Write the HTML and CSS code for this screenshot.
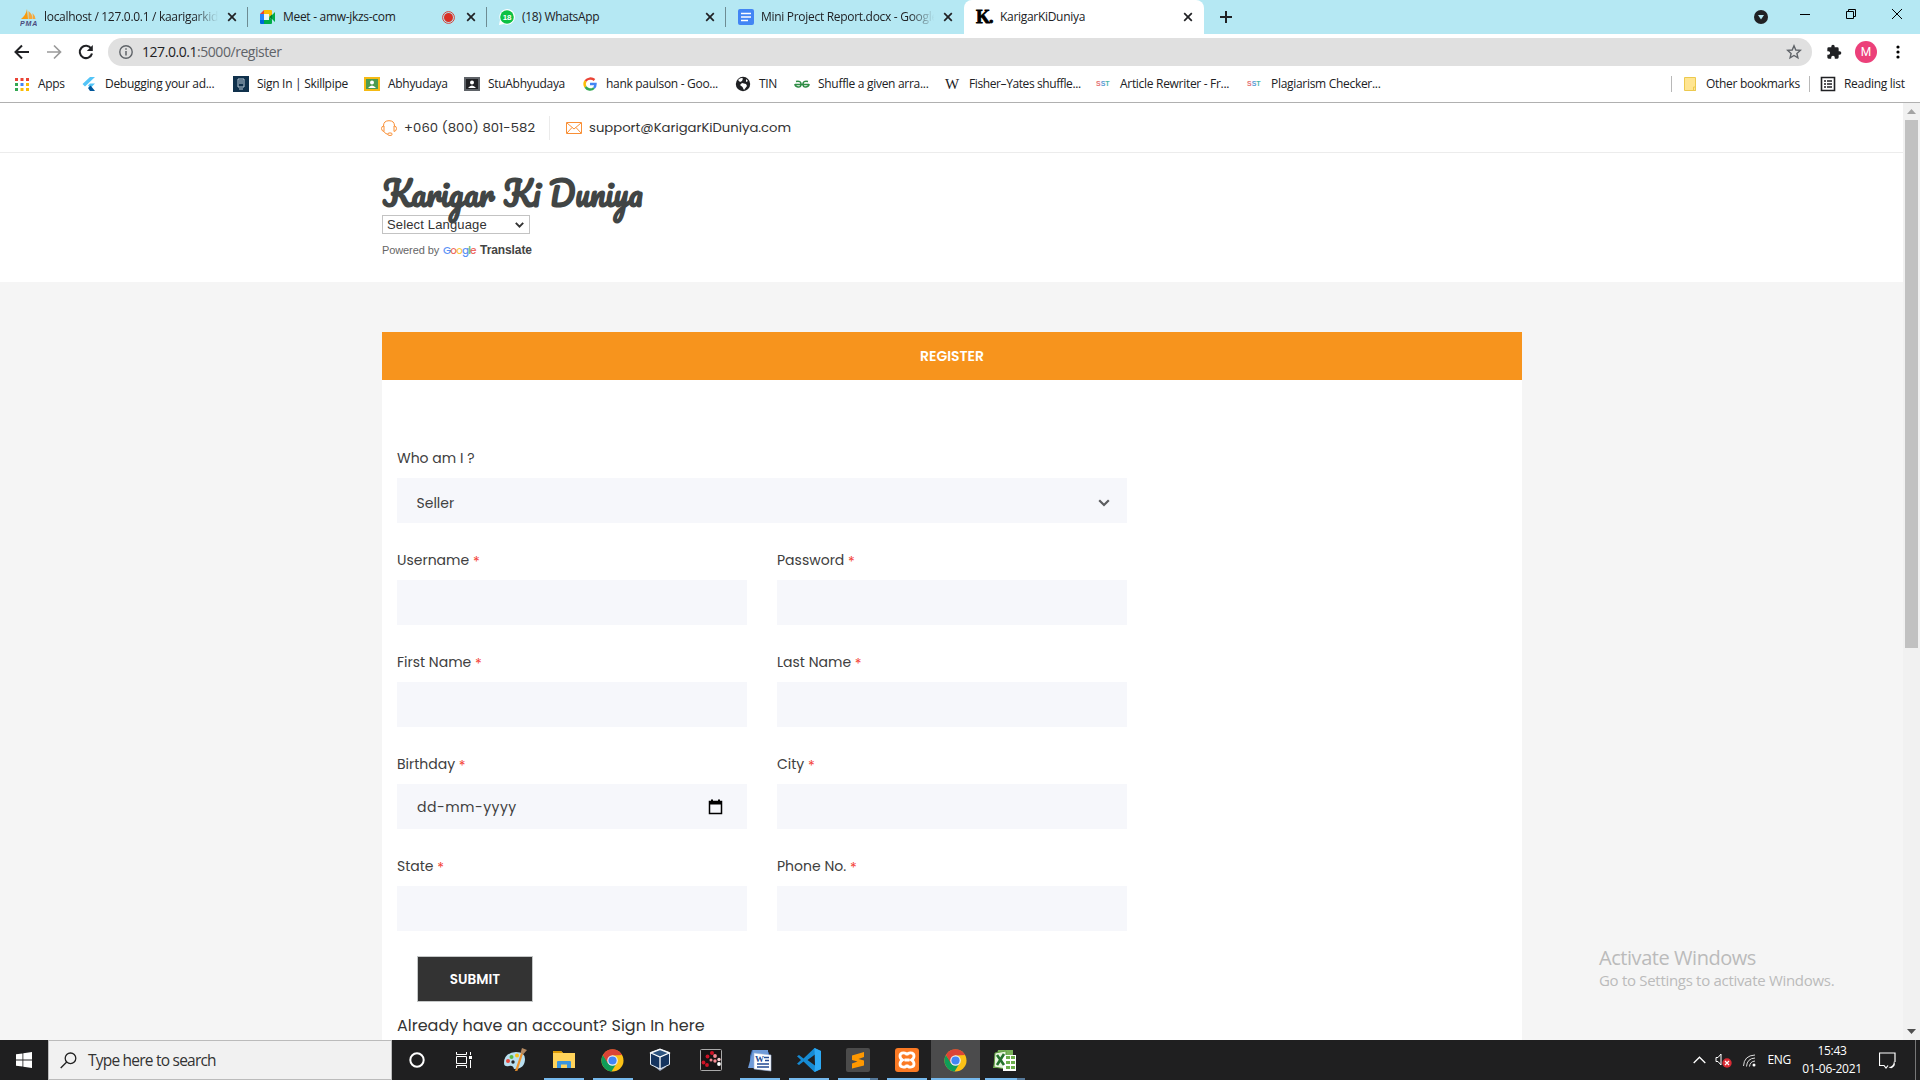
FILE: index.html
```html
<!DOCTYPE html>
<html lang="en">
<head>
<meta charset="utf-8">
<title>KarigarKiDuniya</title>
<link rel="stylesheet" href="styles.css">
</head>
<body>
<svg class="defs" width="0" height="0">
  <symbol id="chrome" viewBox="0 0 24 24">
    <circle cx="12" cy="12" r="11.5" fill="#fbc116"/>
    <path d="M2 6.2A11.5 11.5 0 0 0 11 23.5L16.8 14 12 12 7.500 14z" fill="#0f9d58"/>
    <path d="M2 6.200A11.500 11.500 0 0 1 22 6.200L12 6.700 7 14.500z" fill="#db4437"/>
    <circle cx="12" cy="12" r="5.500" fill="#f1f1f1"/><circle cx="12" cy="12" r="4.300" fill="#4285f4"/>
  </symbol>
  <symbol id="close" viewBox="0 0 10 10"><path d="M1.200 1.200l7.600 7.600M8.800 1.200L1.200 8.800" stroke="#202124" stroke-width="1.700"/></symbol>
</svg>

<header class="tabs">
  <div class="tab">
    <svg width="17" height="17" viewBox="0 0 17 17"><path d="M1 10Q6 6 7 0l1 10z" fill="#f89c0e"/><path d="M8.500 2q4 3 4 8h-4zM12.500 4q3 3 3 6h-2.500z" fill="#f5a83a"/><text x="0" y="16.500" class="pma" textLength="17">PMA</text></svg>
    <span class="tab-title faded">localhost / 127.0.0.1 / kaarigarkid</span>
    <svg class="x"><use href="#close"/></svg>
  </div>
  <div class="tab meet">
    <svg width="17" height="16" viewBox="0 0 17 16"><path d="M1 5l4-4v4z" fill="#ea4335"/><path d="M5 1h7q1 0 1 1v4l-3 2V5H5z" fill="#fbbc04"/><path d="M1 5h4v6H1z" fill="#2684fc"/><path d="M1 11h4v4H2q-1 0-1-1z" fill="#0066da"/><path d="M5 5h5v6H5z" fill="#e8f6f2"/><path d="M5 11h5V8l3 2.500V14q0 1-1 1H5zM13 6l3-3v10l-3-3z" fill="#00ac47"/><path d="M10 8l3-2.500v5z" fill="#00832d"/></svg>
    <span class="tab-title">Meet - amw-jkzs-com</span>
    <svg class="rec" width="13" height="13" viewBox="0 0 13 13"><circle cx="6.500" cy="6.500" r="5.900" fill="none" stroke="#d93025" stroke-width=".900"/><circle cx="6.500" cy="6.500" r="4.500" fill="#d93025"/></svg>
    <svg class="x"><use href="#close"/></svg>
  </div>
  <div class="tab">
    <svg width="16" height="16" viewBox="0 0 16 16"><path d="M0 16l1-5a7.800 7.800 0 1 1 4 4z" fill="#fff"/><circle cx="8" cy="8" r="6.800" fill="#0dc143"/><text x="8" y="11" class="wa" text-anchor="middle">18</text></svg>
    <span class="tab-title">(18) WhatsApp</span>
    <svg class="x"><use href="#close"/></svg>
  </div>
  <div class="tab last">
    <svg width="16" height="16" viewBox="0 0 16 16"><rect width="16" height="16" rx="2" fill="#4285f4"/><path d="M3 4.500h10M3 8h10M3 11.500h7" stroke="#fff" stroke-width="1.700"/></svg>
    <span class="tab-title faded">Mini Project Report.docx - Google</span>
    <svg class="x"><use href="#close"/></svg>
  </div>
  <div class="tab active">
    <span class="k">K.</span>
    <span class="tab-title">KarigarKiDuniya</span>
    <svg class="x"><use href="#close"/></svg>
  </div>
  <svg class="plus" width="12" height="12" viewBox="0 0 12 12"><path d="M6 0v12M0 6h12" stroke="#202124" stroke-width="2"/></svg>
  <div class="window-controls">
    <svg class="tab-search" width="14" height="14" viewBox="0 0 14 14"><circle cx="7" cy="7" r="7" fill="#202124"/><path d="M4 5h6l-3 4.500z" fill="#b5e8f3"/></svg>
    <svg width="12" height="12" viewBox="0 0 12 12"><path d="M1 6.500h10" stroke="#000"/></svg>
    <svg width="12" height="12" viewBox="0 0 12 12"><path d="M1.500 3.500h7v7h-7zM3.500 3V1.500h7v7H9" fill="none" stroke="#000"/></svg>
    <svg width="12" height="12" viewBox="0 0 12 12"><path d="M1 1l10 10M11 1L1 11" stroke="#000"/></svg>
  </div>
</header>

<nav class="toolbar">
  <svg width="16" height="16" viewBox="0 0 16 16"><path d="M15 8H2M8 1.500L1.500 8 8 14.500" fill="none" stroke="#202124" stroke-width="2"/></svg>
  <svg width="16" height="16" viewBox="0 0 16 16"><path d="M1 8h13M8 1.500L14.500 8 8 14.500" fill="none" stroke="#9a9a9a" stroke-width="1.700"/></svg>
  <svg width="16" height="16" viewBox="0 0 16 16"><path d="M13.200 4.500A6.200 6.200 0 1 0 14 9.500" fill="none" stroke="#202124" stroke-width="2.100"/><path d="M14.800 1v6h-6z" fill="#202124"/></svg>
  <div class="omnibox">
    <svg width="14" height="14" viewBox="0 0 14 14"><circle cx="7" cy="7" r="6.200" fill="none" stroke="#5f6368" stroke-width="1.400"/><path d="M7 6v4.500M7 3.300v1.500" stroke="#5f6368" stroke-width="1.500"/></svg>
    <span class="url">127.0.0.1<span class="path">:5000/register</span></span>
    <svg class="star" width="16" height="16" viewBox="0 0 16 16"><path d="M8 1.800l1.800 4.200 4.500.400-3.400 3 1 4.400L8 11.500l-3.900 2.300 1-4.400-3.400-3 4.500-.400z" fill="none" stroke="#5f6368" stroke-width="1.400"/></svg>
  </div>
  <svg class="puzzle" width="16" height="16" viewBox="0 0 24 24"><path d="M20.500 11H19V7a2 2 0 0 0-2-2h-4V3.500a2.500 2.500 0 0 0-5 0V5H4a2 2 0 0 0-2 2v3.800h1.500a2.700 2.700 0 0 1 0 5.400H2V20a2 2 0 0 0 2 2h3.800v-1.500a2.700 2.700 0 0 1 5.400 0V22H17a2 2 0 0 0 2-2v-4h1.500a2.500 2.500 0 0 0 0-5z" fill="#202124"/></svg>
  <span class="avatar">M</span>
  <svg class="dots" width="4" height="14" viewBox="0 0 4 14"><circle cx="2" cy="2" r="1.600"/><circle cx="2" cy="7" r="1.600"/><circle cx="2" cy="12" r="1.600"/></svg>
</nav>

<nav class="bookmarks">
  <div class="bm"><svg viewBox="0 0 16 16"><path d="M1 2h3v3H1zM6.500 2h3v3h-3zM12 2h3v3h-3z" fill="#ea4335"/><path d="M1 7h3v3H1z" fill="#34a853"/><path d="M6.500 7h3v3h-3z" fill="#4285f4"/><path d="M12 7h3v3h-3zM6.500 12h3v3h-3zM12 12h3v3h-3z" fill="#fbbc04"/><path d="M1 12h3v3H1z" fill="#34a853"/></svg><span>Apps</span></div>
  <div class="bm"><svg viewBox="0 0 16 16"><path d="M9 1h5L4 10.500 1.500 8zM9 7.500h5L9.500 12 7 9.500z" fill="#54c5f8"/><path d="M7 12l2.500-2.500L14 15H9z" fill="#01579b"/></svg><span>Debugging your ad...</span></div>
  <div class="bm"><svg viewBox="0 0 16 16"><path d="M0 0h16v16H0z" fill="#10314c"/><path d="M5 3h6v8H5zM6 13h4M6 5h4M6 7h4" fill="none" stroke="#b9cad6"/></svg><span>Sign In | Skillpipe</span></div>
  <div class="bm"><svg viewBox="0 0 16 16"><path d="M0 1h16v14H0z" fill="#f5ba14"/><path d="M2 3h12v10H2z" fill="#4c9b50"/><circle cx="8" cy="6.500" r="2" fill="#fff"/><path d="M4 12q4-5 8 0z" fill="#fff"/></svg><span>Abhyudaya</span></div>
  <div class="bm"><svg viewBox="0 0 16 16"><path d="M0 1h16v14H0z" fill="#5f6368"/><path d="M2 3h12v10H2z" fill="#202124"/><circle cx="8" cy="6.500" r="2" fill="#fff"/><path d="M4 12q4-5 8 0z" fill="#fff"/></svg><span>StuAbhyudaya</span></div>
  <div class="bm"><svg viewBox="0 0 16 16" fill="none" stroke-width="2.400"><path d="M12.500 4A6 5.500 0 0 0 3.500 5" stroke="#ea4335"/><path d="M3.500 5a5.500 5.500 0 0 0 0 6" stroke="#fbbc05"/><path d="M3.500 11a5.500 5.500 0 0 0 8.500 1" stroke="#34a853"/><path d="M12 12q1.500-1.500 1.500-4H8" stroke="#4285f4"/></svg><span>hank paulson - Goo...</span></div>
  <div class="bm"><svg viewBox="0 0 16 16"><circle cx="8" cy="8" r="7.200" fill="#202124"/><path d="M3 4q3-3 5-1.500L7 5 5 6zM7 7l4 1 1 2-3 4-1.500-3L5 9M11 3l2 2-2 1z" fill="#fff"/></svg><span>TIN</span></div>
  <div class="bm"><svg viewBox="0 0 16 16" fill="none" stroke="#2f8d46" stroke-width="1.600"><path d="M1 8.500h14M2 5.500q5-1 5 2.500t-3 3-3-3M14 5.500q-5-1-5 2.500t3 3 3-3"/></svg><span>Shuffle a given arra...</span></div>
  <div class="bm"><b class="w">W</b><span class="tight">Fisher–Yates shuffle...</span></div>
  <div class="bm"><b class="sst"><i>S</i><i>S</i><i>T</i></b><span>Article Rewriter - Fr...</span></div>
  <div class="bm"><b class="sst"><i>S</i><i>S</i><i>T</i></b><span>Plagiarism Checker...</span></div>
  <div class="bm side"><svg viewBox="0 0 16 16"><path d="M2.500 1.500h11v13h-11z" fill="#ffe591" stroke="#ecc94f"/><path d="M11.500 14.500V11h2v3.500z" fill="#ffe591" stroke="#ecc94f"/></svg><span>Other bookmarks</span></div>
  <div class="bm side"><svg viewBox="0 0 16 16"><path d="M1.500 1.500h13v13h-13z" fill="none" stroke="#202124" stroke-width="1.600"/><path d="M4 5h2M7 5h5M4 8h2M7 8h5M4 11h2M7 11h5" stroke="#202124" stroke-width="1.500"/></svg><span>Reading list</span></div>
</nav>

<div class="viewport">
  <div class="page">
    <div class="topbar">
      <div class="contact phone">
        <svg width="16" height="16" viewBox="0 0 16 16" fill="none" stroke="#f98f35"><path d="M2.500 6Q2.500.700 8 .700T13.500 6M3 6Q.500 6 .500 8.500T3 11.500zM13 6q2.500 0 2.500 2.500T13 11.500zM3 11.500q1 2.500 4 2.800"/><rect x="7" y="13" width="4" height="2.400" rx="1"/></svg>
        <span>+060 (800) 801-582</span>
      </div>
      <div class="contact mail">
        <svg width="16" height="12" viewBox="0 0 16 12" fill="none" stroke="#f98f35"><path d="M.500.500h15v11H.500zM1 1l7 6 7-6M1 11l5-5.500M15 11l-5-5.500"/></svg>
        <span>support@KarigarKiDuniya.com</span>
      </div>
    </div>
    <div class="masthead">
      <svg class="logo" width="266" height="48" viewBox="0 0 266 48"><text x="0" y="32" textLength="261" lengthAdjust="spacingAndGlyphs">Karigar Ki Duniya</text></svg>
      <div class="lang"><span>Select Language</span><svg width="9" height="6" viewBox="0 0 9 6"><path d="M.800.800l3.700 3.800L8.200.800" fill="none" stroke="#333" stroke-width="1.900"/></svg></div>
      <div class="powered"><span class="by">Powered by</span><span class="google"><i>G</i><i>o</i><i>o</i><i>g</i><i>l</i><i>e</i></span><b>Translate</b></div>
    </div>
    <main class="card">
      <h1>REGISTER</h1>
      <form class="form">
        <div class="field wide"><label>Who am I ?</label><div class="box"><span>Seller</span><svg width="12" height="8" viewBox="0 0 12 8"><path d="M1.200 1.200L6 6l4.800-4.800" fill="none" stroke="#5c5d60" stroke-width="2.200"/></svg></div></div>
        <div class="field"><label>Username <em>*</em></label><div class="box"></div></div>
        <div class="field"><label>Password <em>*</em></label><div class="box"></div></div>
        <div class="field"><label>First Name <em>*</em></label><div class="box"></div></div>
        <div class="field"><label>Last Name <em>*</em></label><div class="box"></div></div>
        <div class="field"><label>Birthday <em>*</em></label><div class="box date"><span>dd-mm-yyyy</span><svg width="15" height="16" viewBox="0 0 15 16"><path d="M1.500 2.500h12v12h-12z" fill="none" stroke="#000" stroke-width="1.500"/><path d="M1 2h13v3.500H1zM3 .500h2V3H3zM10 .500h2V3h-2z"/></svg></div></div>
        <div class="field"><label>City <em>*</em></label><div class="box"></div></div>
        <div class="field"><label>State <em>*</em></label><div class="box"></div></div>
        <div class="field"><label>Phone No. <em>*</em></label><div class="box"></div></div>
      </form>
      <div class="submit">SUBMIT</div>
      <p class="signin">Already have an account? Sign In here</p>
    </main>
    <div class="watermark"><div>Activate Windows</div><p>Go to Settings to activate Windows.</p></div>
  </div>
  <div class="scrollbar">
    <svg width="9" height="5" viewBox="0 0 9 5"><path d="M0 5L4.500 0 9 5z" fill="#a3a3a3"/></svg>
    <div class="thumb"></div>
    <svg class="down" width="9" height="5" viewBox="0 0 9 5"><path d="M0 0l4.500 5L9 0z" fill="#505050"/></svg>
  </div>
</div>

<footer class="taskbar">
  <div class="start"><svg width="16" height="16" viewBox="0 0 16 16"><path d="M0 2.300l6.500-.900v6.200H0zM7.300 1.300L16 0v7.600H7.300zM0 8.400h6.500v6.200L0 13.700zM7.300 8.400H16V16l-8.700-1.300z" fill="#fff"/></svg></div>
  <div class="search"><svg width="17" height="17" viewBox="0 0 17 17"><circle cx="10.500" cy="6.300" r="5.300" fill="none" stroke="#222" stroke-width="1.300"/><path d="M6.700 10L.700 16" stroke="#222" stroke-width="1.300"/></svg><span>Type here to search</span></div>
  <div class="app"><svg width="16" height="16" viewBox="0 0 16 16"><circle cx="8" cy="8" r="6.700" fill="none" stroke="#fff" stroke-width="2"/></svg></div>
  <div class="app view"><svg width="18" height="16" viewBox="0 0 18 16" fill="none" stroke="#fff"><path d="M1.500 4.500h10v7h-10zM1.500 0v2.500h10V0M1.500 16v-2.500h10V16M15.500 0v3M15.500 8v8"/><path d="M14 4h3v3h-3z" fill="#fff" stroke="none"/></svg></div>
  <div class="app"><svg width="24" height="24" viewBox="0 0 24 24"><path d="M1 15Q1 5 13 4q9 0 9 7 0 10-11 10-1-4-5-3-5 1-5-3z" fill="#b9dff0"/><circle cx="5" cy="13" r="2" fill="#e5483d"/><circle cx="8.500" cy="9" r="2" fill="#58b947"/><circle cx="14" cy="7.500" r="2" fill="#fbc218"/><circle cx="10" cy="14" r="1.700" fill="#222"/><path d="M12 23l6-18 2 .800-5.500 17z" fill="#ec922e"/><path d="M17.500 5L19 0l5 2-3.500 4z" fill="#b58a62"/></svg></div>
  <div class="app run"><svg width="24" height="22" viewBox="0 0 24 22"><path d="M1 2h8l2 2h12v15H1z" fill="#ffd35a"/><path d="M1 2h8l2 2H1z" fill="#dc9a05"/><path d="M5 19v-6q0-1 1-1h12q1 0 1 1v6h-4v-3.500H9V19z" fill="#3b95dd"/></svg></div>
  <div class="app run"><svg width="23" height="23"><use href="#chrome"/></svg></div>
  <div class="app vbox"><svg width="22" height="24" viewBox="0 0 22 24"><path d="M6 19l5 4 6-4v-4H6z" fill="#9ba8c0"/><path d="M1.500 4.500L11 1l9.500 3.500v12L11 21l-9.500-4.500z" fill="#15345f" stroke="#dfe8f2"/><path d="M2 5l9 4 9-4-9-3.500zM11 9v12" fill="#2c5380" stroke="#fff" stroke-width="1.300"/></svg></div>
  <div class="app"><svg width="22" height="22" viewBox="0 0 22 22"><rect x=".500" y=".500" width="21" height="21" rx="1" fill="#171314" stroke="#aaa"/><g fill="#cf1226"><circle cx="12" cy="4" r="2"/><circle cx="7.500" cy="7.500" r="1.900"/><circle cx="3.500" cy="13.500" r="1.900"/><circle cx="7" cy="16" r="1.900"/></g><g fill="#f58b93"><circle cx="15" cy="7" r="1.900"/><circle cx="11" cy="11" r="1.500"/><circle cx="15" cy="12" r="1.700"/></g><circle cx="19" cy="10.500" r="1.700" fill="#f7c8ca"/><circle cx="19" cy="15" r="1.900" fill="#fff"/></svg></div>
  <div class="app run"><svg width="24" height="23" viewBox="0 0 24 23"><path d="M4 1h15l2 3v15H2V7z" fill="#3f6db5"/><path d="M5 1h15v18H0z" fill="#6f9bd8"/><path d="M6 4l17 2v16L6 20z" fill="#fff" stroke="#9ab4da" stroke-width=".600"/><path d="M16 8.500h5M17 11.500h4M9 15h12M9 18h12" stroke="#254b93" stroke-width="1.700"/><text x="7" y="13" class="wd">W</text></svg></div>
  <div class="app run"><svg width="24" height="24" viewBox="0 0 24 24"><path d="M17.500 0L24 3v18l-6.500 3L6.500 13.600 2 17l-2-1.200L4 12 0 8.200 2 7l4.500 3.400zM18 6.500L10.500 12l7.500 5.500z" fill="#168bd4" fill-rule="evenodd"/><path d="M17.500 0L24 3v18l-6.500 3L18 17z" fill="#2eaaf5"/></svg></div>
  <div class="app run multi"><svg width="24" height="24" viewBox="0 0 24 24"><rect width="24" height="24" rx="2" fill="#4b4b4b"/><path d="M6 7.500L18 4v5l-5.500 2 5.500 1.500v5L6 20.500v-5l5.500-2L6 12z" fill="#ff9800"/></svg></div>
  <div class="app run"><svg width="24" height="24" viewBox="0 0 24 24"><rect width="24" height="24" rx="3" fill="#fb7a24"/><path d="M12 7.500C12 4 5 4 5 8q0 2.500 2.500 4Q5 13.500 5 16c0 4 7 4 7 .500 0 3.500 7 3.500 7-.500q0-2.500-2.500-4Q19 10.500 19 8c0-4-7-4-7-.500zM9.500 12h5" fill="none" stroke="#fff" stroke-width="2.800"/></svg></div>
  <div class="app run current"><svg width="23" height="23"><use href="#chrome"/></svg></div>
  <div class="app run multi"><svg width="24" height="23" viewBox="0 0 24 23"><path d="M5 1h15v18H0z" fill="#79b259"/><path d="M2 4l11-2v18L1 18z" fill="#e9f5df" stroke="#5d9d3e"/><path d="M10 6h13v16H10z" fill="#fff"/><path d="M13 7h4v3h-4zM18 7h4v3h-4zM13 12h4v3h-4zM18 12h4v3h-4zM13 17h4v3h-4zM18 17h4v3h-4z" fill="#6cae4c"/><path d="M4 6l7 10M11 5L4 16" stroke="#25722c" stroke-width="2.600"/></svg></div>
  <div class="tray">
    <svg width="13" height="8" viewBox="0 0 13 8"><path d="M.700 7l5.800-5.800L12.300 7" fill="none" stroke="#fff" stroke-width="1.300"/></svg>
    <svg class="vol" width="17" height="15" viewBox="0 0 17 15"><path d="M1 4.500h2L6 1v11L3 8.500H1z" fill="none" stroke="#fff"/><circle cx="12" cy="10" r="4.700" fill="#d92b34"/><path d="M10 8l4 4M14 8l-4 4" stroke="#fff" stroke-width="1.200"/></svg>
    <svg class="wifi" width="13" height="13" viewBox="0 0 13 13" fill="none" stroke="#ddd"><path d="M.500 12Q1 1.500 12 1M3.500 12.500Q4 4.500 12 4M6.500 12.500Q7 7.500 12 7"/><circle cx="11" cy="11" r="1.500" fill="#fff" stroke="none"/></svg>
    <span class="eng">ENG</span>
    <div class="clock"><span>15:43</span><span>01-06-2021</span></div>
    <svg class="note" width="17" height="17" viewBox="0 0 17 17"><path d="M9 13.500L7 16l-2-2.500H.500V1h15.500v9" fill="none" stroke="#fff" stroke-width="1.200"/><path d="M15 9q2.500 5-2 7-2 .500-3.500-1 5 0 5.500-6z" fill="#fff"/></svg>
    <i class="peek"></i>
  </div>
</footer>
</body>
</html>
```
FILE: styles.css
```css
* { box-sizing: border-box; }
body { margin: 0; width: 1920px; height: 1080px; overflow: hidden; display: flex; flex-direction: column; background: #fff; color: #202124; font: 12px/16px "Segoe UI", "Open Sans", sans-serif; letter-spacing: -.3px; }
svg { display: block; flex: none; }
.defs { position: absolute; }
i, em { font-style: normal; }

.tabs { display: flex; align-items: center; height: 34px; padding-left: 8px; background: #b5e8f3; flex: none; }
.tab { display: flex; align-items: center; gap: 7px; width: 239px; height: 20px; padding: 0 10px 0 12px; border-right: 1px solid #6d8c93; white-space: nowrap; }
.tab:first-child { width: 240px; }
.tab.meet { padding-left: 11px; }
.tab.last { width: 238px; border-right: 0; padding-right: 11px; }
.tab.active { width: 240px; height: 34px; padding-right: 11px; background: #fff; border: 0; border-radius: 8px 8px 0 0; }
.tab-title { flex: 1; overflow: hidden; }
.faded { -webkit-mask-image: linear-gradient(90deg, #000 85%, transparent 99%); mask-image: linear-gradient(90deg, #000 85%, transparent 99%); }
.rec { margin-right: 4px; }
.x { width: 10px; height: 10px; }
.k { font: 900 18px/20px "Liberation Serif", serif; color: #000; width: 17px; letter-spacing: -1px; -webkit-text-stroke: .8px #000; }
.pma { font: italic bold 7px "Liberation Sans", sans-serif; fill: #4a4a7c; }
.wa { font: bold 8px "Liberation Sans", sans-serif; fill: #fff; }
.plus { margin-left: 16px; }
.window-controls { display: flex; align-items: center; gap: 34px; height: 28px; align-self: flex-start; margin-left: auto; padding-right: 17px; }
.tab-search { margin: 6px -3px 0 0; }

.toolbar { display: flex; align-items: center; height: 36px; padding: 0 20px 0 14px; gap: 16px; flex: none; }
.omnibox { display: flex; align-items: center; flex: 1; height: 28px; margin: 0 -2px 0 -2px; padding: 0 10px 0 11px; gap: 9px; border-radius: 14px; background: #e0e0e0; }
.url { font-size: 14px; letter-spacing: -.45px; }
.path { color: #5f6368; }
.star { margin-left: auto; }
.puzzle { margin-right: -3px; }
.avatar { width: 22px; height: 22px; border-radius: 50%; background: #ec407a; color: #fff; text-align: center; font: 12px/22px Roboto, sans-serif; letter-spacing: 0; }
.dots { margin-left: 3px; }

.bookmarks { display: grid; grid-template-columns: 67px 152px 131px 100px 118px 153px 59px 151px 151px 151px 424px 138px 1fr; align-items: center; height: 33px; padding: 0 0 5px 14px; border-bottom: 1px solid #b0b0b0; flex: none; }
.bm { display: flex; align-items: center; gap: 8px; white-space: nowrap; }
.bm svg { width: 16px; height: 16px; }
.side { border-left: 1px solid #b8b8b8; padding-left: 10px; }
.tight { letter-spacing: -.4px; }
.w { width: 16px; font: 15px/16px "Liberation Serif", serif; }
.sst { width: 16px; font: bold 7px/16px "Liberation Sans", sans-serif; letter-spacing: 0; color: #e57373; }
.sst i:nth-child(2) { color: #5a9bd5; }
.sst i:nth-child(3) { color: #4db6ac; }

.viewport { display: flex; flex: 1; min-height: 0; overflow: hidden; }
.page { position: relative; flex: 1; background: #f5f5f5; overflow: hidden; color: #333; font-family: Poppins, Inter, sans-serif; letter-spacing: 0; }
.topbar { display: flex; align-items: center; height: 50px; padding-left: 381px; background: #fff; border-bottom: 1px solid #ececec; }
.contact { display: flex; align-items: center; gap: 7px; height: 24px; font-size: 13.200px; }
.phone { width: 169px; border-right: 1px solid #ebebeb; }
.phone span { letter-spacing: .05px; }
.mail { margin-left: 16px; }
.masthead { height: 129px; padding: 22px 0 0 382px; background: #fff; display: flex; flex-direction: column; }
.logo { position: relative; z-index: 1; margin-bottom: -8px; overflow: visible; }
.logo text { font: bold 33px Pacifico, Lato, cursive; fill: #414545; }
.lang { display: flex; align-items: center; justify-content: space-between; width: 148px; height: 19px; padding: 0 5px 0 4px; border: 1px solid #c3c3c3; font: 13px/17px "Liberation Sans", sans-serif; letter-spacing: .15px; }
.powered { display: flex; align-items: baseline; gap: 4px; margin-top: 8px; font: 11px/17px "Liberation Sans", sans-serif; color: #666; letter-spacing: -.1px; }
.powered b { font-size: 12px; color: #444; }
.google { font: 500 10.500px/17px Poppins, Lato, sans-serif; letter-spacing: -.9px; width: 33px; }
.google i { color: #5b92f5; }
.google i:nth-child(2), .google i:nth-child(6) { color: #ee6a5f; }
.google i:nth-child(3) { color: #fbcb43; }
.google i:nth-child(5) { color: #5cb973; }

.card { width: 1140px; height: 720px; margin: 50px 0 0 382px; background: #fff; }
.card h1 { margin: 0; height: 48px; background: #f7941d; color: #fff; font-size: 14px; line-height: 48px; font-weight: 600; text-align: center; }
.form { display: grid; grid-template-columns: 350px 350px; column-gap: 30px; row-gap: 25px; padding: 66px 0 0 15px; }
.field { height: 77px; }
.wide { grid-column: span 2; }
.field label { display: block; height: 32px; line-height: 24px; font-size: 14px; color: #404040; }
.field em { display: inline-block; color: #f44336; font-size: 14px; line-height: 16px; vertical-align: -2px; }
.box { display: flex; align-items: center; justify-content: space-between; height: 45px; padding: 4px 17px 0 19.500px; background: #f6f7fb; font-size: 14px; color: #404040; }
.date { padding: 0 24px 0 20px; letter-spacing: .5px; }
.submit { width: 116px; height: 46px; margin: 25px 0 0 35px; border: 1px solid #c5c8c8; background: #333; color: #fff; text-align: center; font-size: 13.600px; line-height: 45px; font-weight: 600; }
.signin { margin: 12px 0 0 15px; font-size: 16px; line-height: 24px; }
.watermark { position: absolute; left: 1599px; top: 841px; color: #bbb; font-family: "Segoe UI", "Open Sans", sans-serif; }
.watermark div { font-size: 20px; line-height: 28px; letter-spacing: -.45px; }
.watermark p { margin: 0; font-size: 15px; line-height: 17px; letter-spacing: -.3px; }
.scrollbar { display: flex; flex-direction: column; align-items: center; width: 17px; padding: 6px 0; background: #f1f1f1; }
.thumb { width: 13px; height: 528px; margin-top: 6px; background: #c1c1c1; }
.down { margin-top: auto; }

.taskbar { display: flex; height: 40px; background: #1f1f20; color: #fff; flex: none; }
.start { display: grid; place-items: center; width: 48px; }
.search { display: flex; align-items: center; width: 344px; padding-left: 11px; gap: 11px; background: #f1f1f1; border: 1px solid #bbb; color: #333; font-size: 15.500px; letter-spacing: -.78px; }
.app { display: grid; place-items: center; width: 49px; }
.view { padding-right: 4px; }
.vbox { padding-right: 3px; }
.run { background: linear-gradient(#76b9ed, #76b9ed) 50% 100% / 40px 2px no-repeat; }
.multi { background: linear-gradient(90deg, #76b9ed 32px, #56799a 32px) 50% 100% / 40px 2px no-repeat; }
.current { background: linear-gradient(#76b9ed, #76b9ed) 0 100% / 49px 2px no-repeat #4b4b4c; }
.wd { font: bold 9px "Liberation Serif", serif; fill: #254b93; }
.tray { display: flex; align-items: center; margin-left: auto; }
.vol { margin-left: 9px; }
.wifi { margin-left: 11px; }
.eng { margin-left: 11px; }
.clock { display: flex; flex-direction: column; align-items: center; width: 60px; margin: 0 0 0 11px; line-height: 18px; }
.note { margin-left: 17px; }
.peek { width: 1px; height: 40px; margin: 0 4px 0 19px; background: #777; }
```
